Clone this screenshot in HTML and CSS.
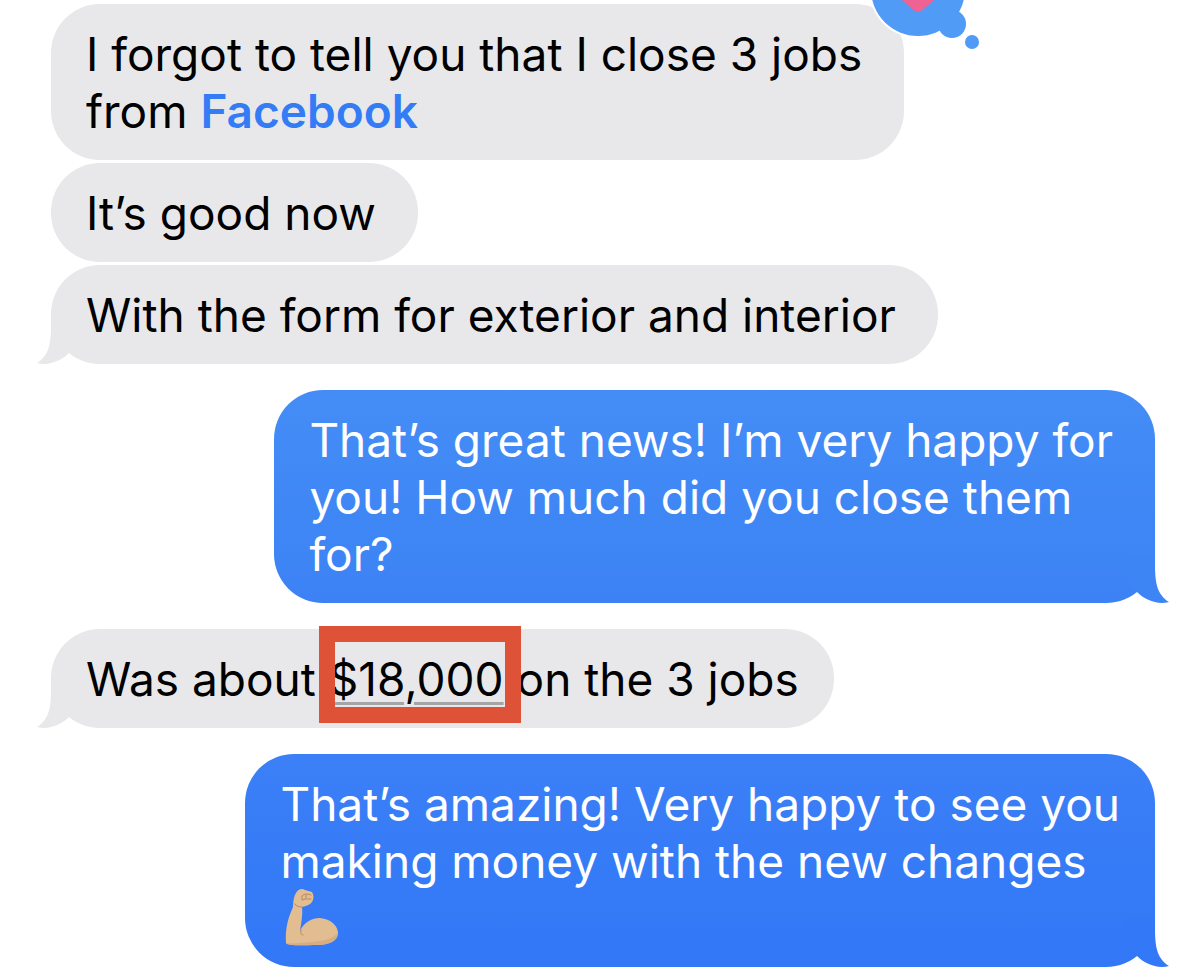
FILE: index.html
```html
<!DOCTYPE html>
<html lang="en">
<head>
  <meta charset="UTF-8">
  <meta name="viewport" content="width=device-width, initial-scale=1.0">
  <title>Messages</title>
  <link rel="stylesheet" href="styles.css">
</head>
<body>

  <main class="chat">
    <div class="message received">
      <p>I forgot to tell you that I close 3 jobs<br>from <a class="mention" href="#">Facebook</a></p>
      <!-- Heart reaction -->
      <svg class="reaction" viewBox="0 0 120 120" aria-label="Loved">
        <circle cx="54" cy="56" r="49" fill="#fff"/>
        <circle cx="54" cy="56" r="47" fill="#4f9bf5"/>
        <circle cx="88" cy="91" r="14" fill="#4f9bf5"/>
        <circle cx="108" cy="109" r="7" fill="#4f9bf5"/>
        <path d="M54 79C51 79 46 74 39 68C31 61 27 55 27 46C27 30 46 28 54 40C62 28 81 30 81 46C81 55 77 61 69 68C62 74 57 79 54 79Z" fill="#ee6294"/>
      </svg>
    </div>

    <div class="message received">
      <p>It’s good now</p>
    </div>

    <div class="message received last">
      <p>With the form for exterior and interior</p>
      <svg class="tail" viewBox="0 0 64 50"><path d="M14 2V12C14 32 11 42 0 49C12 52 24 47 32 39L44 24V2Z"/></svg>
    </div>

    <div class="message sent last">
      <p>That’s great news! I’m very happy for<br>you! How much did you close them<br>for?</p>
      <svg class="tail" viewBox="0 0 64 50"><path d="M14 2V12C14 32 11 42 0 49C12 52 24 47 32 39L44 24V2Z"/></svg>
    </div>

    <div class="message received tight last">
      <p>Was about <a class="amount" href="#">$18,000</a> on the 3 jobs</p>
      <svg class="tail" viewBox="0 0 64 50"><path d="M14 2V12C14 32 11 42 0 49C12 52 24 47 32 39L44 24V2Z"/></svg>
    </div>

    <div class="message sent newest tight last">
      <p>That’s amazing! Very happy to see you<br>making money with the new changes<br>
        <svg class="emoji" viewBox="0 0 56 60" aria-label="Flexed biceps">
          <path d="M2 56C1 42 4 31 9 20C9 14 10 9 12 6C14 2 18 1 21 3L28 5C30 8 30 12 28 15C26 18 22 19 18 20C19 28 17 37 16 44C20 35 28 31 36 31C47 32 54 39 54 46C54 54 45 58 33 58C21 58 8 59 3 57Z" fill="#e2bd92"/>
          <path d="M2 56C12 57 27 55 36 54C44 53 50 50 54 46C54 54 45 58 33 58C21 58 8 59 3 57Z" fill="#d6ae81"/>
          <path d="M17 43C16 46 17 48 19 48M18 20C14 20 12 19 11 17M18 9C20 6 25 7 27 8M18 9V13L22 12V8M23 12L27 12" fill="none" stroke="#b78a5e" stroke-width="1" stroke-linecap="round"/>
        </svg>
      </p>
      <svg class="tail" viewBox="0 0 64 50"><path d="M14 2V12C14 32 11 42 0 49C12 52 24 47 32 39L44 24V2Z"/></svg>
    </div>
  </main>

</body>
</html>
```

FILE: styles.css
```css
* {
  box-sizing: border-box;
}

body {
  margin: 0;
  background-color: #fff;
  font-family: Inter, "Liberation Sans", sans-serif;
  font-size: 46px;
  line-height: 57px;
  color: #000;
}

.chat {
  display: flex;
  flex-direction: column;
  align-items: flex-start;
  gap: 3px;
  padding: 4px 45px 12px 51px;
  overflow: hidden;
}

/* Message bubbles */
.message {
  position: relative;
  padding: 22px 42px 20px 35px;
  border-radius: 49px;
}

.message p {
  position: relative;
  z-index: 1;
  margin: 0;
  white-space: nowrap;
}

.received {
  background-color: #e8e8ea;
}

.sent {
  align-self: flex-end;
  background: linear-gradient(#448df6, #3c82f5);
  color: #fff;
}

.newest {
  background: linear-gradient(#3b80f6, #3277f6);
}

.tight {
  padding-right: 35px;
}

.last {
  margin-bottom: 23px;
}

.newest.last {
  margin-bottom: 0;
}

/* Bubble tails */
.tail {
  position: absolute;
  left: -14px;
  bottom: 0;
  width: 64px;
  height: 50px;
  fill: #e8e8ea;
}

.sent .tail {
  left: auto;
  right: -14px;
  transform: scaleX(-1);
  fill: #3d84f5;
}

.newest .tail {
  fill: #3378f6;
}

.reaction {
  position: absolute;
  top: -71px;
  right: -80px;
  width: 120px;
  height: 120px;
}

.mention {
  color: #347cf6;
  font-weight: 600;
  text-decoration: none;
}

/* Highlighted amount */
.amount {
  position: relative;
  color: #000;
  text-decoration: underline;
  text-decoration-color: #a5a5a8;
  text-decoration-thickness: 3px;
  text-underline-offset: 6px;
}

.amount::after {
  content: "";
  position: absolute;
  inset: -25px -17px -16px -10px;
  border: 16px solid #de5337;
}

.emoji {
  display: block;
  width: 56px;
  height: 60px;
  margin: -3px 0 0 4px;
}
```
